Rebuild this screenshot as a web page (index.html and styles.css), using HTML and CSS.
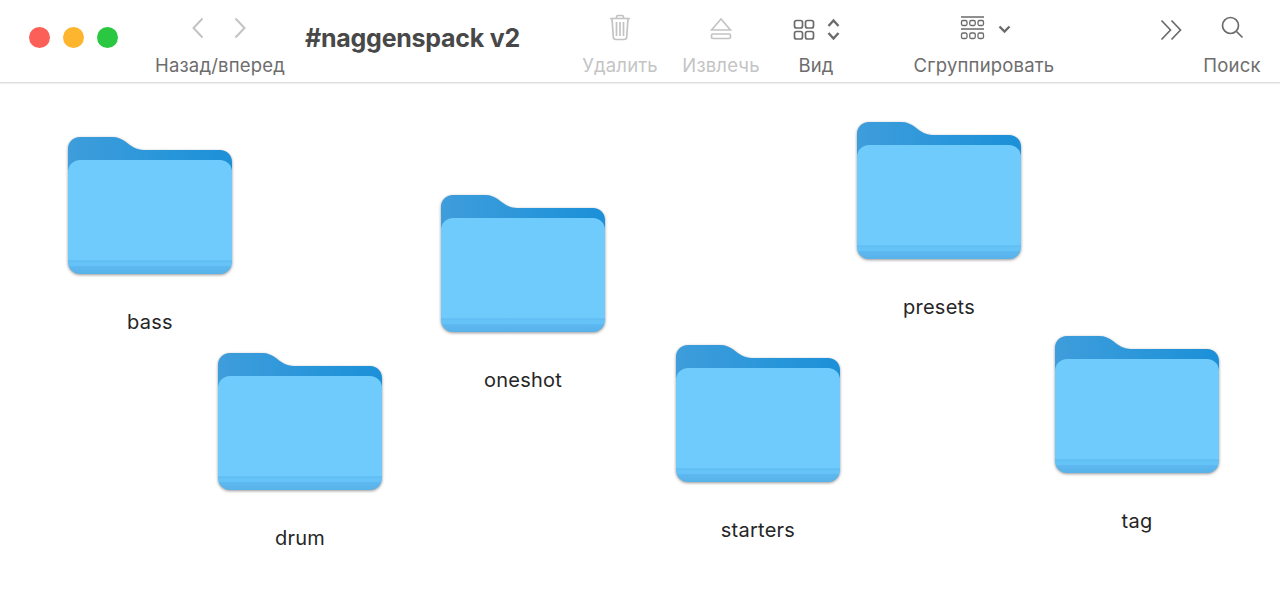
FILE: index.html
```html
<!DOCTYPE html>
<html lang="ru">

<head>
    <meta charset="UTF-8">
    <meta name="viewport" content="width=device-width, initial-scale=1.0">
    <title>#naggenspack v2</title>
    <link rel="stylesheet" href="styles.css">
</head>

<body>
    <svg class="defs" width="0" height="0">
        <defs>
            <linearGradient id="folderBack" x1="0" y1="0" x2="1" y2="0">
                <stop offset="0" stop-color="#3f9ddb" />
                <stop offset="0.5" stop-color="#2c97da" />
                <stop offset="1" stop-color="#1b90d8" />
            </linearGradient>
            <linearGradient id="folderFront" x1="0" y1="0" x2="0" y2="1">
                <stop offset="0" stop-color="#6fcbfb" />
                <stop offset="0.875" stop-color="#6ecbfb" />
                <stop offset="0.885" stop-color="#5fbcf2" />
                <stop offset="0.9" stop-color="#66c3f7" />
                <stop offset="0.925" stop-color="#66c3f7" />
                <stop offset="0.935" stop-color="#5cb8ef" />
                <stop offset="1" stop-color="#58b2ea" />
            </linearGradient>
            <symbol id="folder" viewBox="0 0 164 138">
                <path fill="url(#folderBack)" d="M0 60V12C0 5 5 0 12 0H44C50 0 54 2 58 5C63 9 68 13 76 13H152C159 13 164 18 164 25V60Z" />
                <rect y="23" width="164" height="114" rx="12" fill="url(#folderFront)" />
            </symbol>
        </defs>
    </svg>

    <header class="toolbar">
        <div class="lights">
            <span class="light red"></span>
            <span class="light yellow"></span>
            <span class="light green"></span>
        </div>

        <div class="tool nav-tool">
            <div class="tool-icons">
                <svg width="12" height="40" viewBox="0 0 12 40" class="stroke-faint">
                    <path d="M10.5 8.5L1.5 18L10.5 27.5" />
                </svg>
                <svg width="12" height="40" viewBox="0 0 12 40" class="stroke-faint">
                    <path d="M1.5 8.5L10.5 18L1.5 27.5" />
                </svg>
            </div>
            <span class="tool-label">Назад/вперед</span>
        </div>

        <div class="window-title">#naggenspack v2</div>

        <div class="tool delete-tool disabled">
            <div class="tool-icons">
                <svg width="22" height="40" viewBox="0 0 22 40" class="stroke-faint thin">
                    <path d="M1 8.5H21M7.5 8.5V7C7.5 6 8.2 5.5 9 5.5H13C13.8 5.5 14.5 6 14.5 7V8.5" />
                    <path d="M3 8.5L4.3 27C4.4 28.6 5.2 29.5 7 29.5H15C16.8 29.5 17.6 28.6 17.7 27L19 8.5" />
                    <path d="M7.5 12V26M11 12V26M14.5 12V26" />
                </svg>
            </div>
            <span class="tool-label">Удалить</span>
        </div>

        <div class="tool eject-tool disabled">
            <div class="tool-icons">
                <svg width="22" height="40" viewBox="0 0 22 40" class="stroke-faint thin">
                    <path d="M11 9L20.5 20H1.5Z" />
                    <rect x="1.5" y="24" width="19" height="4.5" rx="1.5" />
                </svg>
            </div>
            <span class="tool-label">Извлечь</span>
        </div>

        <div class="tool view-tool">
            <div class="tool-icons">
                <svg width="22" height="40" viewBox="0 0 22 40" class="stroke-dark thin">
                    <rect x="1.5" y="10.5" width="8" height="7.5" rx="2" />
                    <rect x="12.5" y="10.5" width="8" height="7.5" rx="2" />
                    <rect x="1.5" y="21.5" width="8" height="7.5" rx="2" />
                    <rect x="12.5" y="21.5" width="8" height="7.5" rx="2" />
                </svg>
                <svg width="13" height="40" viewBox="0 0 13 40" class="stroke-dark">
                    <path d="M1.5 16L6.5 10.5L11.5 16M1.5 23L6.5 28.5L11.5 23" />
                </svg>
            </div>
            <span class="tool-label">Вид</span>
        </div>

        <div class="tool group-tool">
            <div class="tool-icons">
                <svg width="25" height="40" viewBox="0 0 25 40" class="stroke-dark hair">
                    <path d="M1 7H24M1 19H24" />
                    <rect x="1.5" y="10.5" width="5.5" height="5" rx="1.5" />
                    <rect x="9.75" y="10.5" width="5.5" height="5" rx="1.5" />
                    <rect x="18" y="10.5" width="5.5" height="5" rx="1.5" />
                    <rect x="1.5" y="23" width="5.5" height="5.5" rx="1.5" />
                    <rect x="9.75" y="23" width="5.5" height="5.5" rx="1.5" />
                    <rect x="18" y="23" width="5.5" height="5.5" rx="1.5" />
                </svg>
                <svg width="13" height="40" viewBox="0 0 13 40" class="stroke-dark">
                    <path d="M1.5 16.5L6.5 21.5L11.5 16.5" />
                </svg>
            </div>
            <span class="tool-label">Сгруппировать</span>
        </div>

        <div class="tool more-tool">
            <div class="tool-icons">
                <svg width="23" height="40" viewBox="0 0 23 40" class="stroke-dark thin">
                    <path d="M1.5 10.5L10.5 20L1.5 29.5M11.5 10.5L20.5 20L11.5 29.5" />
                </svg>
            </div>
        </div>

        <div class="tool search-tool">
            <div class="tool-icons">
                <svg width="23" height="40" viewBox="0 0 23 40" class="stroke-dark thin">
                    <circle cx="9.5" cy="15.5" r="8" />
                    <path d="M15.5 21.5L21.5 27.5" />
                </svg>
            </div>
            <span class="tool-label">Поиск</span>
        </div>
    </header>

    <main class="desktop">
        <div class="item item-bass">
            <svg class="folder"><use href="#folder" /></svg>
            <span class="item-name">bass</span>
        </div>
        <div class="item item-oneshot">
            <svg class="folder"><use href="#folder" /></svg>
            <span class="item-name">oneshot</span>
        </div>
        <div class="item item-presets">
            <svg class="folder"><use href="#folder" /></svg>
            <span class="item-name">presets</span>
        </div>
        <div class="item item-drum">
            <svg class="folder"><use href="#folder" /></svg>
            <span class="item-name">drum</span>
        </div>
        <div class="item item-starters">
            <svg class="folder"><use href="#folder" /></svg>
            <span class="item-name">starters</span>
        </div>
        <div class="item item-tag">
            <svg class="folder"><use href="#folder" /></svg>
            <span class="item-name">tag</span>
        </div>
    </main>
</body>

</html>
```

FILE: styles.css
```css
html,
body {
    height: 100%;
}

body {
    margin: 0;
    background-color: #ffffff;
    font-family: Inter, "Liberation Sans", sans-serif;
    overflow: hidden;
}

.defs {
    position: absolute;
}

.toolbar {
    display: flex;
    align-items: flex-start;
    height: 82px;
    padding-left: 29px;
    border-bottom: 1px solid #dedede;
    box-shadow: 0 1px 1px #f0f0f0;
}

.lights {
    display: flex;
    gap: 13px;
    margin-top: 27px;
}

.light {
    width: 21px;
    height: 21px;
    border-radius: 50%;
}

.red {
    background-color: #fc5f57;
}

.yellow {
    background-color: #fdb52e;
}

.green {
    background-color: #29c840;
}

.tool {
    display: flex;
    flex-direction: column;
    align-items: center;
    padding-top: 10px;
    flex: none;
}

.tool-icons {
    display: flex;
    height: 40px;
}

.tool-label {
    font-size: 18.5px;
    line-height: 30px;
    letter-spacing: 0.18px;
    color: #6d6d6d;
    white-space: nowrap;
}

.disabled .tool-label {
    color: #c4c4c4;
}

.window-title {
    width: 215px;
    margin: 20px 0 0 20px;
    font-size: 25px;
    font-weight: 700;
    line-height: 36px;
    letter-spacing: -0.25px;
    color: #484848;
    white-space: nowrap;
}

.stroke-faint {
    fill: none;
    stroke: #c3c3c3;
    stroke-width: 2;
}

.stroke-dark {
    fill: none;
    stroke: #6b6b6b;
    stroke-width: 2.4;
}

.thin {
    stroke-width: 1.7;
}

.hair {
    stroke-width: 1.3;
}

.nav-tool {
    width: 130px;
    margin-left: 37px;
}

.nav-tool .tool-icons {
    gap: 30px;
    margin-right: 2px;
}

.delete-tool {
    width: 76px;
    margin-left: 62px;
}

.eject-tool {
    width: 78px;
    margin-left: 24px;
}

.view-tool {
    width: 60px;
    margin-left: 26px;
}

.view-tool .tool-icons {
    gap: 12px;
}

.group-tool {
    width: 142px;
    margin-left: 67px;
}

.group-tool .tool-icons {
    gap: 13px;
    margin-left: 2px;
}

.more-tool {
    width: 23px;
    margin-left: 105px;
}

.search-tool {
    width: 58px;
    margin-left: 20px;
}

.search-tool .tool-icons {
    margin-left: 1px;
}

.desktop {
    position: relative;
}

/* finder icons sit where the user dropped them */
.item {
    position: absolute;
    display: flex;
    flex-direction: column;
    align-items: center;
    width: 164px;
}

.folder {
    display: block;
    width: 164px;
    height: 138px;
    filter: drop-shadow(0 1px 1.5px rgba(60, 60, 60, 0.55));
}

.item-name {
    margin-top: 33px;
    font-size: 20px;
    line-height: 28px;
    letter-spacing: 0.25px;
    color: #262626;
}

.item-bass {
    left: 68px;
    top: 54px;
}

.item-oneshot {
    left: 441px;
    top: 112px;
}

.item-presets {
    left: 857px;
    top: 39px;
}

.item-drum {
    left: 218px;
    top: 270px;
}

.item-starters {
    left: 676px;
    top: 262px;
}

.item-tag {
    left: 1055px;
    top: 253px;
}
```
